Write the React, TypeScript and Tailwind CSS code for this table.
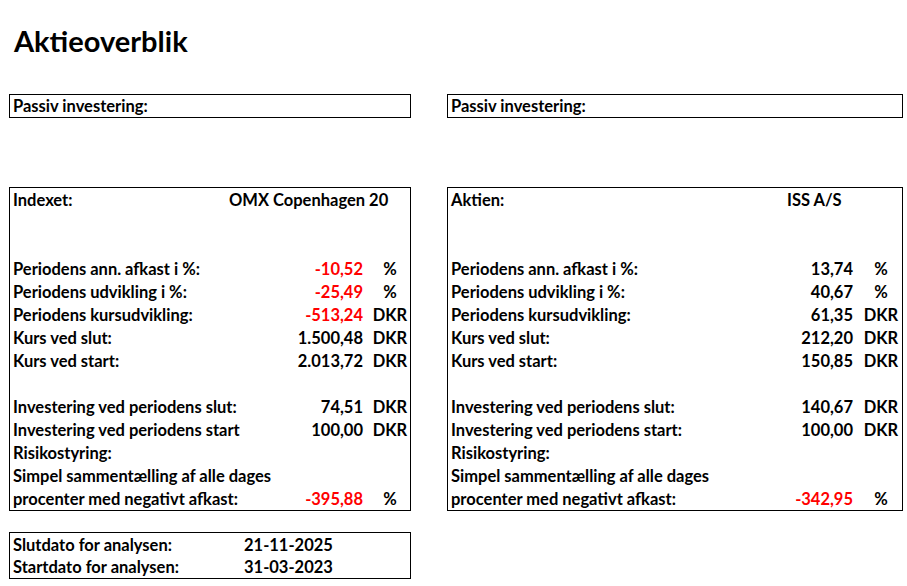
import React from 'react';

type Row = { label: string; value?: string; unit?: string; neg?: boolean };

const indexRows: Row[] = [
  { label: '' },
  { label: '' },
  { label: 'Periodens ann. afkast i %:', value: '-10,52', unit: '%', neg: true },
  { label: 'Periodens udvikling i %:', value: '-25,49', unit: '%', neg: true },
  { label: 'Periodens kursudvikling:', value: '-513,24', unit: 'DKR', neg: true },
  { label: 'Kurs ved slut:', value: '1.500,48', unit: 'DKR' },
  { label: 'Kurs ved start:', value: '2.013,72', unit: 'DKR' },
  { label: '' },
  { label: 'Investering ved periodens slut:', value: '74,51', unit: 'DKR' },
  { label: 'Investering ved periodens start', value: '100,00', unit: 'DKR' },
  { label: 'Risikostyring:' },
  { label: 'Simpel sammentælling af alle dages' },
  { label: 'procenter med negativt afkast:', value: '-395,88', unit: '%', neg: true },
];

const stockRows: Row[] = [
  { label: '' },
  { label: '' },
  { label: 'Periodens ann. afkast i %:', value: '13,74', unit: '%' },
  { label: 'Periodens udvikling i %:', value: '40,67', unit: '%' },
  { label: 'Periodens kursudvikling:', value: '61,35', unit: 'DKR' },
  { label: 'Kurs ved slut:', value: '212,20', unit: 'DKR' },
  { label: 'Kurs ved start:', value: '150,85', unit: 'DKR' },
  { label: '' },
  { label: 'Investering ved periodens slut:', value: '140,67', unit: 'DKR' },
  { label: 'Investering ved periodens start:', value: '100,00', unit: 'DKR' },
  { label: 'Risikostyring:' },
  { label: 'Simpel sammentælling af alle dages' },
  { label: 'procenter med negativt afkast:', value: '-342,95', unit: '%', neg: true },
];

function DataRow({ row, unitCol }: { row: Row; unitCol: string }) {
  return (
    <div className={`grid h-[23px] items-center ${unitCol}`}>
      <span className="whitespace-nowrap pl-[3px]">{row.label}</span>
      <span className={`pr-[7px] text-right ${row.neg ? 'text-[#ff0000]' : ''}`}>{row.value}</span>
      <span className="text-center">{row.unit}</span>
    </div>
  );
}

export default function App() {
  return (
    <div
      className="min-h-[586px] w-[907px] bg-white pl-[9px] pt-[23px] text-[16.5px] font-bold leading-[20px] text-black"
      style={{ fontFamily: 'Lato, "Liberation Sans", sans-serif' }}
    >
      <h1 className="pl-[5px] text-[29px] font-bold leading-[36px]">Aktieoverblik</h1>

      <div className="mt-[35px] flex gap-[36px]">
        {/* Left column */}
        <div className="w-[402px]">
          <div className="flex h-[24px] items-center border border-black pl-[3px]">Passiv investering:</div>

          <div className="mt-[69px] border border-black">
            <div className="grid h-[23px] grid-cols-[219px_1fr] items-center">
              <span className="pl-[3px]">Indexet:</span>
              <span>OMX Copenhagen 20</span>
            </div>
            {indexRows.map((r, i) => (
              <DataRow key={i} row={r} unitCol="grid-cols-[1fr_auto_40px]" />
            ))}
          </div>

          <div className="mt-[21px] border border-black">
            <div className="grid h-[23px] grid-cols-[234px_1fr] items-center">
              <span className="pl-[3px]">Slutdato for analysen:</span>
              <span>21-11-2025</span>
            </div>
            <div className="grid h-[22px] grid-cols-[234px_1fr] items-center">
              <span className="pl-[3px]">Startdato for analysen:</span>
              <span>31-03-2023</span>
            </div>
          </div>
        </div>

        {/* Right column */}
        <div className="w-[456px]">
          <div className="flex h-[24px] items-center border border-black pl-[3px]">Passiv investering:</div>

          <div className="mt-[69px] border border-black">
            <div className="grid h-[23px] grid-cols-[339px_1fr] items-center">
              <span className="pl-[3px]">Aktien:</span>
              <span>ISS A/S</span>
            </div>
            {stockRows.map((r, i) => (
              <DataRow key={i} row={r} unitCol="grid-cols-[1fr_auto_42px]" />
            ))}
          </div>
        </div>
      </div>
    </div>
  );
}
